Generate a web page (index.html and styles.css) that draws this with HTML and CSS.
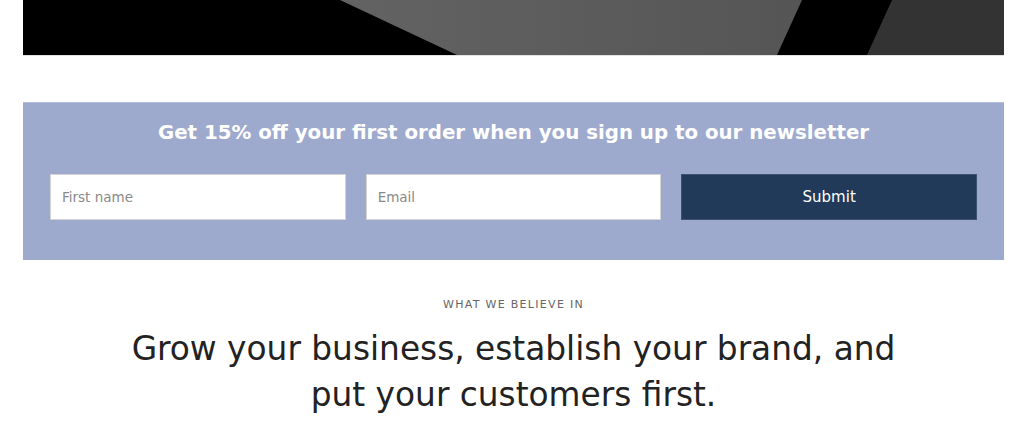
FILE: index.html
```html
<!DOCTYPE html>
<html lang="en">
<head>
  <meta charset="UTF-8">
  <meta name="viewport" content="width=device-width, initial-scale=1.0">
  <title>Newsletter</title>
  <link rel="stylesheet" href="styles.css">
</head>
<body>
  <div class="page">
    <div class="hero">
      <svg viewBox="0 0 981 55" preserveAspectRatio="none" width="981" height="55">
        <defs>
          <linearGradient id="shade" x1="0" y1="0" x2="1" y2="0">
            <stop offset="0" stop-color="#636363"/>
            <stop offset="1" stop-color="#555555"/>
          </linearGradient>
        </defs>
        <rect width="981" height="55" fill="#000"/>
        <polygon points="317,0 779,0 754,55 434,55" fill="url(#shade)"/>
        <polygon points="869,0 981,0 981,55 844,55" fill="#333"/>
      </svg>
    </div>

    <div class="signup">
      <h2>Get 15% off your first order when you sign up to our newsletter</h2>
      <form class="signup-form" onsubmit="return false">
        <input type="text" placeholder="First name">
        <input type="email" placeholder="Email">
        <button type="submit">Submit</button>
      </form>
    </div>

    <div class="believe">
      <p class="eyebrow">WHAT WE BELIEVE IN</p>
      <h1>Grow your business, establish your brand, and<br>put your customers first.</h1>
    </div>
  </div>
</body>
</html>
```

FILE: styles.css
```css
body {
  margin: 0;
  font-family: "DejaVu Sans", sans-serif;
  background-color: #fff;
  color: #222;
}
.page {
  margin: 0 20px 0 23px;
}
.hero {
  height: 55px;
  border-bottom: 1px solid #e2e2e2;
}
.hero svg {
  display: block;
}
.signup {
  margin-top: 46px;
  height: 158px;
  box-sizing: border-box;
  padding: 15px 27px 0;
  background-color: #9eaacd;
  border-top: 1px solid #b4bdda;
}
.signup h2 {
  margin: 0;
  font-size: 19.8px;
  line-height: 30px;
  font-weight: bold;
  text-align: center;
  color: #fff;
}
.signup-form {
  display: grid;
  grid-template-columns: 1fr 1fr 1fr;
  gap: 20px;
  margin-top: 26px;
}
.signup-form input {
  height: 46px;
  box-sizing: border-box;
  padding: 0 11px;
  border: 1px solid #d4d4d4;
  font-family: "DejaVu Sans", sans-serif;
  font-size: 13.5px;
  color: #333;
  background-color: #fff;
}
.signup-form input::placeholder {
  color: #8a8a8a;
}
.signup-form button {
  height: 46px;
  border: 1px solid #3d5270;
  background-color: #213a5a;
  color: #fff;
  font-family: "DejaVu Sans", sans-serif;
  font-size: 15px;
  cursor: pointer;
}
.believe {
  text-align: center;
}
.eyebrow {
  margin: 37px 0 0;
  font-size: 11px;
  line-height: 16px;
  letter-spacing: 1.3px;
  color: #666;
}
.believe h1 {
  margin: 13px 0 0;
  font-size: 32.8px;
  line-height: 46px;
  font-weight: normal;
  color: #222;
}
```
